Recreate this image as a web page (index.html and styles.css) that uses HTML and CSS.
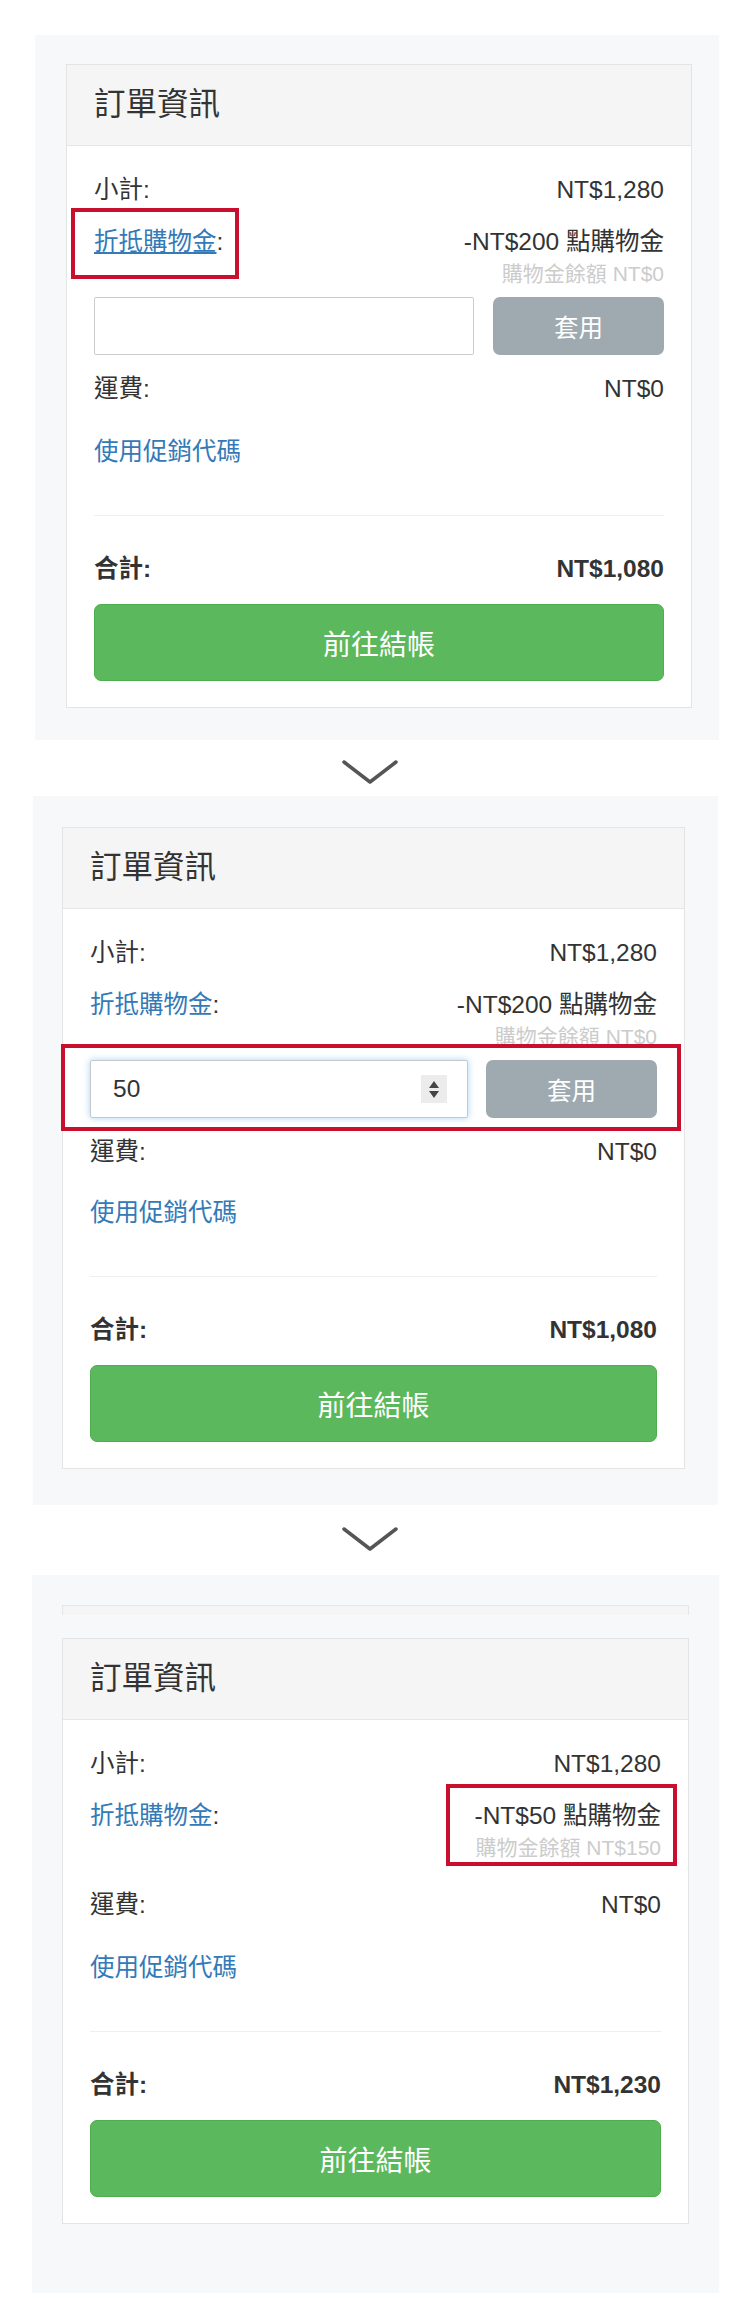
FILE: index.html
```html
<!DOCTYPE html>
<html lang="zh-Hant">
<head>
<meta charset="utf-8">
<title>訂單資訊</title>
<link rel="stylesheet" href="styles.css">
</head>
<body>
<div class="page">

  <section class="stage s1">
    <div class="card">
      <div class="card-head">訂單資訊</div>
      <div class="card-body">
        <div class="line"><span>小計:</span><span>NT$1,280</span></div>
        <div class="line disc">
          <span class="lbl"><a class="link under">折抵購物金</a>:</span>
          <div class="val"><div>-NT$200 點購物金</div><div class="sub">購物金餘額 NT$0</div></div>
          <div class="mark mark-s1"></div>
        </div>
        <div class="apply">
          <div class="field"></div>
          <div class="btn-apply">套用</div>
        </div>
        <div class="line ship"><span>運費:</span><span>NT$0</span></div>
        <a class="link promo">使用促銷代碼</a>
        <div class="rule"></div>
        <div class="line total"><span>合計:</span><span>NT$1,080</span></div>
        <div class="checkout">前往結帳</div>
      </div>
    </div>
  </section>

  <div class="chev chev1">
    <svg width="56" height="24" viewBox="0 0 56 24"><polyline points="2,2 28,22 54,2" fill="none" stroke="#555" stroke-width="3.5" stroke-linecap="round" stroke-linejoin="round"/></svg>
  </div>

  <section class="stage s2">
    <div class="card">
      <div class="card-head">訂單資訊</div>
      <div class="card-body">
        <div class="line"><span>小計:</span><span>NT$1,280</span></div>
        <div class="line disc">
          <span class="lbl"><a class="link">折抵購物金</a>:</span>
          <div class="val"><div>-NT$200 點購物金</div><div class="sub">購物金餘額 NT$0</div></div>
        </div>
        <div class="apply">
          <div class="field focus">
            <span class="num">50</span>
            <span class="spin"><span class="up"></span><span class="down"></span></span>
          </div>
          <div class="btn-apply">套用</div>
          <div class="mark mark-s2"></div>
        </div>
        <div class="line ship ship2"><span>運費:</span><span>NT$0</span></div>
        <a class="link promo">使用促銷代碼</a>
        <div class="rule"></div>
        <div class="line total"><span>合計:</span><span>NT$1,080</span></div>
        <div class="checkout">前往結帳</div>
      </div>
    </div>
  </section>

  <div class="chev chev2">
    <svg width="56" height="24" viewBox="0 0 56 24"><polyline points="2,2 28,22 54,2" fill="none" stroke="#555" stroke-width="3.5" stroke-linecap="round" stroke-linejoin="round"/></svg>
  </div>

  <section class="stage s3">
    <div class="ghost"></div>
    <div class="card">
      <div class="card-head">訂單資訊</div>
      <div class="card-body">
        <div class="line"><span>小計:</span><span>NT$1,280</span></div>
        <div class="line disc done">
          <span class="lbl"><a class="link">折抵購物金</a>:</span>
          <div class="val"><div>-NT$50 點購物金</div><div class="sub">購物金餘額 NT$150</div><div class="mark mark-s3"></div></div>
        </div>
        <div class="line ship"><span>運費:</span><span>NT$0</span></div>
        <a class="link promo">使用促銷代碼</a>
        <div class="rule"></div>
        <div class="line total"><span>合計:</span><span>NT$1,230</span></div>
        <div class="checkout">前往結帳</div>
      </div>
    </div>
  </section>

</div>
</body>
</html>
```
FILE: styles.css
```css
* { box-sizing: border-box; }
html, body { margin: 0; padding: 0; background: #fff; }
body {
  font-family: "Liberation Sans", Arial, "Noto Sans CJK TC", sans-serif;
  color: #333;
  font-size: 24.5px;
}
.page { display: flex; flex-direction: column; min-height: 2314px; }

.stage { background: #f7f8fa; }
.s1 { margin-top: 35px; margin-left: 35px; width: 684px; padding: 29px 27px 32px 31px; }
.s2 { margin-left: 33px; width: 685px; padding: 31px 33px 36px 29px; }
.s3 { margin-left: 32px; width: 687px; padding: 30px 30px 69px 30px; }

.ghost {
  height: 10px;
  margin-bottom: 23px;
  border: 1px solid #e6e6e6;
  border-bottom: none;
  background: #f5f5f5;
}

.card { background: #fff; border: 1px solid #e4e4e4; }
.card-head {
  background: #f5f5f5;
  border-bottom: 1px solid #e6e6e6;
  padding: 22px 27px 23px;
  font-size: 31.5px;
  line-height: 35px;
  color: #333;
}
.card-body { padding: 26px 27px 26px; }

.line {
  display: flex;
  justify-content: space-between;
  line-height: 35px;
  margin-bottom: 17px;
}
.disc { position: relative; margin-bottom: 8px; }
.disc.done { margin-bottom: 24px; }
.val { text-align: right; position: relative; }
.sub { font-size: 21px; line-height: 30px; color: #ccc; }

.link { color: #337ab7; text-decoration: none; }
.under { text-decoration: underline; }
.lbl { color: #333; }

.apply {
  position: relative;
  display: flex;
  gap: 19px;
  height: 58px;
  margin-bottom: 16px;
}
.s2 .apply { gap: 18px; }
.field {
  flex: 1;
  border: 1px solid #ccc;
  border-radius: 2px;
  background: #fff;
  display: flex;
  align-items: center;
  padding: 0 20px 0 22px;
}
.field.focus {
  border-color: #c4c9cf;
  box-shadow: 0 0 7px rgba(102, 175, 233, 0.55);
}
.num { flex: 1; font-size: 24.5px; color: #333; }
.spin {
  width: 26px;
  height: 28px;
  background: #ececec;
  display: flex;
  flex-direction: column;
  align-items: center;
  justify-content: center;
  gap: 3px;
}
.up, .down { width: 0; height: 0; border-left: 5px solid transparent; border-right: 5px solid transparent; }
.up { border-bottom: 7px solid #444; }
.down { border-top: 7px solid #444; }

.btn-apply {
  width: 171px;
  background: #9ea9b0;
  border-radius: 7px;
  color: #fff;
  display: flex;
  align-items: center;
  justify-content: center;
  font-size: 24.5px;
}

.ship { margin-bottom: 28px; }
.ship2 { margin-bottom: 26px; }
.promo { display: block; line-height: 35px; margin-bottom: 46px; }
.rule { height: 1px; background: #eee; margin-bottom: 35px; }
.total { font-weight: bold; margin-bottom: 18px; }

.checkout {
  height: 77px;
  background: #5cb85c;
  border: 1px solid #4cae4c;
  border-radius: 7px;
  color: #fff;
  font-size: 28px;
  display: flex;
  align-items: center;
  justify-content: center;
}

.chev { display: flex; }
.chev svg { display: block; margin-left: 342px; }
.chev1 { height: 56px; padding-top: 20px; }
.chev2 { height: 70px; padding-top: 22px; }

.mark { position: absolute; border: 4px solid #c8102e; pointer-events: none; }
.mark-s1 { left: -23px; top: -16px; width: 168px; height: 71px; }
.mark-s2 { left: -29px; right: -24px; top: -16px; bottom: -13px; }
.mark-s3 { left: -28px; right: -16px; top: -14px; bottom: -3px; }
```
